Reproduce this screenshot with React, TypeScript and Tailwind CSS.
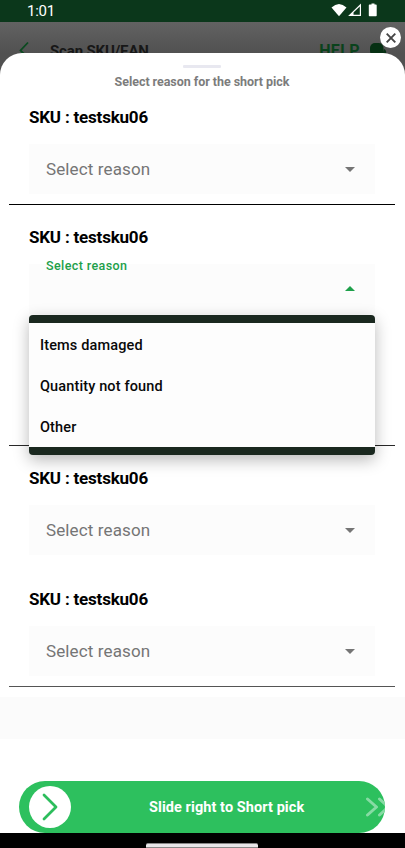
import React from "react";

const options = ["Items damaged", "Quantity not found", "Other"];

function StatusBar() {
  return (
    <div className="flex h-[22px] items-center justify-between bg-[#0b371b] pl-[27px] pr-[27px] text-white">
      <span className="pt-px text-[15px] leading-[21px] tracking-[-0.25px]">1:01</span>
      <svg width="47" height="14" viewBox="0 0 47 14" fill="none" className="relative -top-px">
        <path d="M0.5 4.5Q8 -2.5 15.5 4.5L8 13.3Z" fill="#fff" />
        <path d="M29.4 2V12.4H18.6Z" stroke="#fff" strokeWidth="1.2" />
        <path d="M22.5 9V12.5H18.8Z" fill="#fff" />
        <path d="M38.5 1.5h2V0.5h3v1h1.5q.7 0 .7.7v10.2q0 .8-.7.8h-6.5q-.7 0-.7-.8V2.2q0-.7.7-.7Z" fill="#fff" />
      </svg>
    </div>
  );
}

function AppHeader() {
  return (
    <div className="flex h-[31px] items-start bg-gradient-to-b from-[#626262] to-[#515151] pl-[19px] pt-[19px]">
      <svg width="10" height="18" viewBox="0 0 10 18" fill="none" className="shrink-0">
        <path d="M9 1.5L1.5 9.5L9 17" stroke="#0b4a20" strokeWidth="1.8" />
      </svg>
      <span className="ml-[21px] mt-px whitespace-nowrap text-[15px] font-bold leading-[18px] tracking-[-0.15px] text-[#171717]">
        Scan SKU/EAN
      </span>
      <span className="ml-auto mt-px text-[16px] font-bold leading-[18px] tracking-[0.4px] text-[#0a421c]">HELP</span>
      <svg width="18" height="16" viewBox="0 0 18 16" className="ml-[10px] mr-[17px] mt-[2px] shrink-0">
        <rect x="0" y="0" width="13.5" height="13" rx="5" fill="#063013" />
        <path d="M14 6q3 1 2 6h-4Z" fill="#063013" />
      </svg>
    </div>
  );
}

function Arrow({ up = false }: { up?: boolean }) {
  return (
    <svg
      width="10"
      height="5"
      viewBox="0 0 10 5"
      className={up ? "mb-px text-[#1ea04a]" : "text-[#757575]"}
    >
      <path d={up ? "M0 5L5 0L10 5Z" : "M0 0H10L5 5Z"} fill="currentColor" />
    </svg>
  );
}

function Heading() {
  return (
    <h2 className="ml-[29px] h-[47px] whitespace-nowrap pt-[10px] text-[17px] font-bold leading-[20px] tracking-[-0.2px] text-black">
      SKU : testsku06
    </h2>
  );
}

function Field() {
  return (
    <div className="mx-[29px] flex h-[50px] w-[346px] items-center justify-between bg-[#fcfcfc] pl-[17px] pr-[20px]">
      <span className="text-[17px] leading-[24px] tracking-[0.12px] text-[#757575]">Select reason</span>
      <Arrow />
    </div>
  );
}

function OpenField() {
  return (
    <div className="relative mx-[29px] h-[50px] w-[346px] bg-[#fcfcfc] pl-[17px] pr-[20px]">
      <div className="flex h-full items-center justify-between">
        <span className="-mt-[46px] text-[12.5px] font-medium leading-[14px] tracking-[0.4px] text-[#1ea04a]">Select reason</span>
        <Arrow up />
      </div>
      <div className="absolute left-0 top-[51px] z-10 flex h-[140px] w-[346px] flex-col overflow-hidden rounded-[4px] border-y-8 border-[#1a281f] bg-[#fdfdfd] pt-[2px] shadow-[0_5px_16px_rgba(0,0,0,0.28)]">
        {options.map((o) => (
          <div key={o} className="flex h-[41px] shrink-0 items-center pl-[11px] text-[14.5px] font-medium tracking-[0.13px] text-[#090909]">
            {o}
          </div>
        ))}
      </div>
    </div>
  );
}

function Chevrons() {
  return (
    <svg width="24" height="20" viewBox="0 0 24 20" fill="none" stroke="#87dba4" strokeWidth="3" strokeLinecap="round" strokeLinejoin="round">
      <path d="M2.5 2L11.5 10L2.5 18M14.5 2L23.5 10L14.5 18" />
    </svg>
  );
}

export default function App() {
  return (
    <div className="relative flex h-[848px] w-[405px] flex-col overflow-hidden bg-white font-[Roboto,sans-serif]">
      <StatusBar />
      <AppHeader />
      <button aria-label="Close" className="absolute left-[380px] top-[27px] z-20 flex size-[21px] items-center justify-center rounded-full bg-white">
        <svg width="10" height="10" viewBox="0 0 10 10" stroke="#454545" strokeWidth="1.9">
          <path d="M0.7 0.7L9.3 9.3M9.3 0.7L0.7 9.3" />
        </svg>
      </button>
      <div className="flex flex-1 flex-col bg-[#515151]">
        <main className="flex flex-1 flex-col rounded-t-[22px] bg-white">
          <div className="flex h-[44px] flex-col items-center">
            <div className="mr-[2px] mt-[12px] h-[3px] w-[38px] rounded-[1px] bg-[#e8e8f0]" />
            <h1 className="mr-px mt-[6px] whitespace-nowrap text-[12.5px] font-bold leading-[16px] tracking-[-0.05px] text-[#7c7c7c]">
              Select reason for the short pick
            </h1>
          </div>
          <section className="mb-[12px] h-[108px]">
            <Heading />
            <Field />
            <div className="ml-[9px] mt-[10px] h-px w-[386px] bg-black" />
          </section>
          <section className="mb-[12px] flex h-[229px] flex-col">
            <Heading />
            <OpenField />
            <div className="ml-[9px] mt-auto h-px w-[386px] bg-[#292929]" />
          </section>
          <section className="mb-[13px] h-[108px]">
            <Heading />
            <Field />
          </section>
          <section className="h-[108px]">
            <Heading />
            <Field />
            <div className="ml-[9px] mt-[10px] h-px w-[386px] bg-[#555]" />
          </section>
          <div className="mt-[10px] h-[42px] bg-[#fbfbfb]" />
        </main>
      </div>
      <footer className="bg-white">
        <div className="ml-[19px] flex h-[52px] w-[366px] items-center overflow-hidden rounded-[26px] bg-[#2dc05e] pl-[10px]">
          <div className="flex size-[42px] shrink-0 items-center justify-center rounded-full bg-white">
            <svg width="16" height="28" viewBox="0 0 16 28" fill="none" stroke="#2dbd5c" strokeWidth="2.8" strokeLinecap="round" strokeLinejoin="round">
              <path d="M2 2L14 14L2 26" />
            </svg>
          </div>
          <span className="ml-[78px] w-[156px] shrink-0 whitespace-nowrap pt-[2px] text-[14.5px] font-bold tracking-[0.07px] text-white">
            Slide right to Short pick
          </span>
          <div className="ml-[60px] shrink-0">
            <Chevrons />
          </div>
        </div>
      </footer>
      <div className="flex h-[15px] items-end justify-center bg-black pr-px">
        <div className="h-[5px] w-[112px] rounded-t-[2px] border-y border-[#888] bg-[#e9e6e9]" />
      </div>
    </div>
  );
}
